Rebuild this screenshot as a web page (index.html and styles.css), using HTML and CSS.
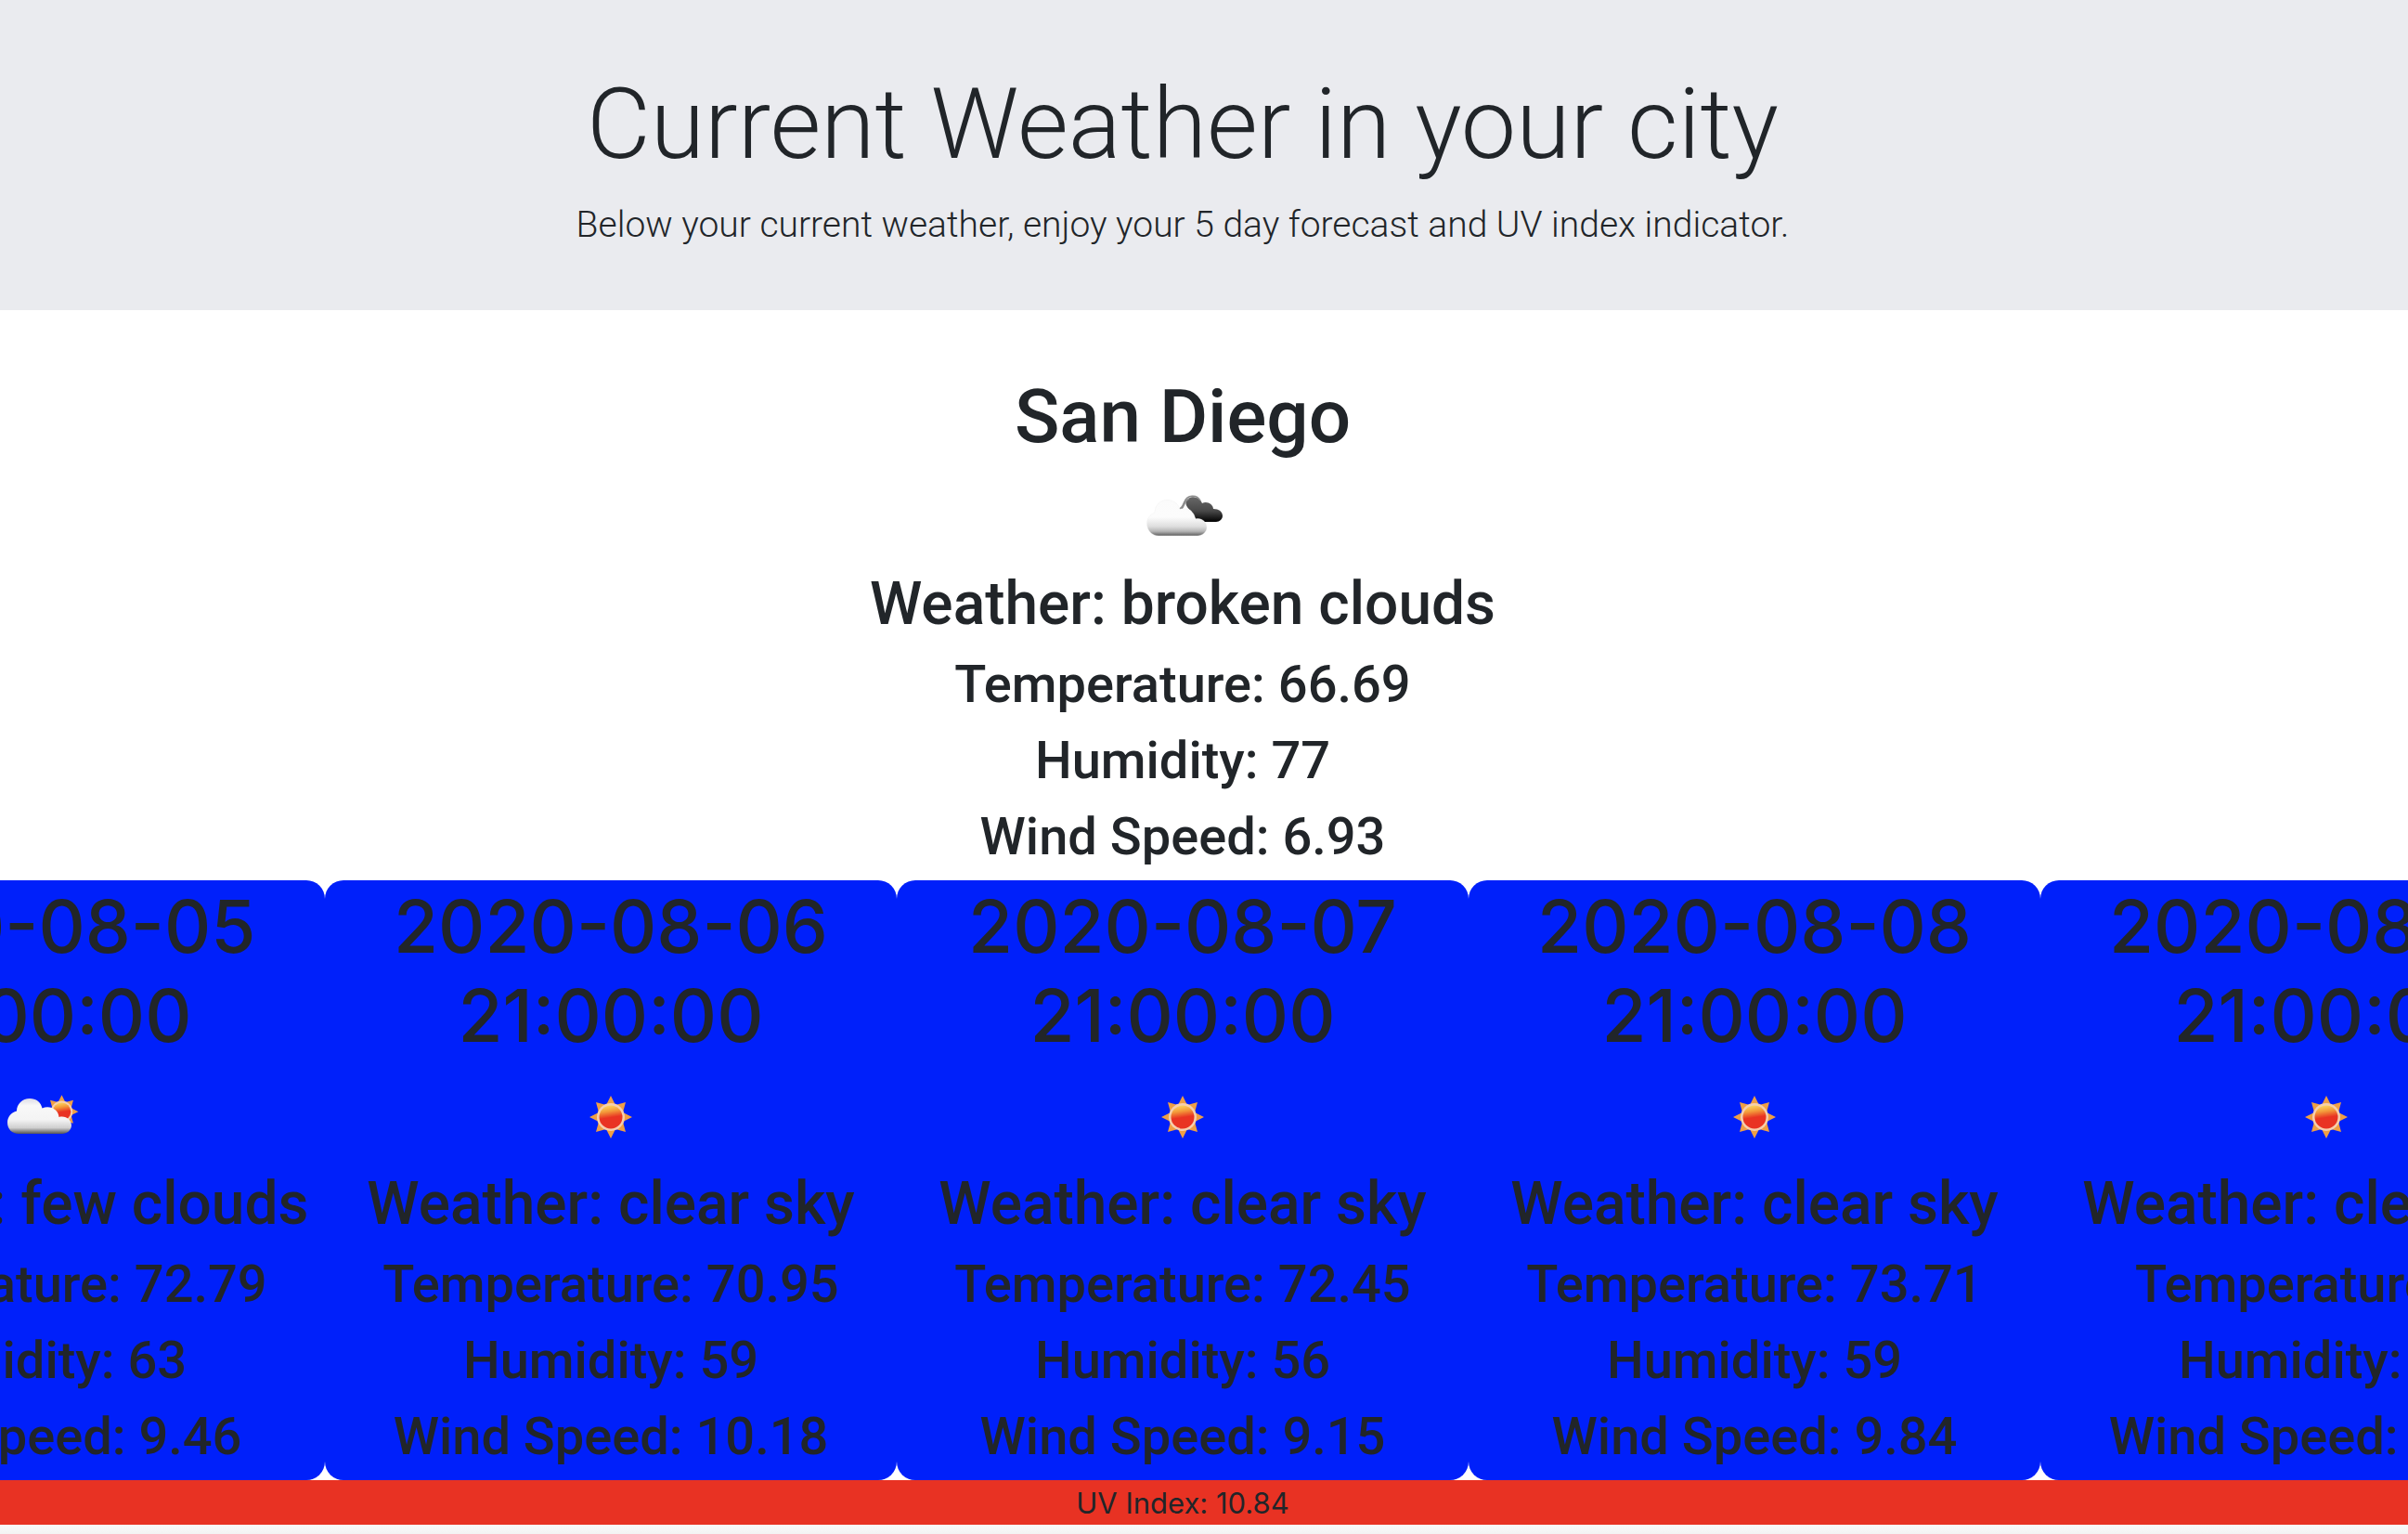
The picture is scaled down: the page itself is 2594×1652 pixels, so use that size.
FILE: index.html
```html
<!DOCTYPE html>
<html lang="en">
<head>
<meta charset="utf-8">
<meta name="viewport" content="width=device-width, initial-scale=1">
<title>Current Weather</title>
<link rel="stylesheet" href="styles.css">
</head>
<body>
<svg class="sprite" aria-hidden="true">
  <defs>
    <linearGradient id="cloud-fill" gradientUnits="userSpaceOnUse" x1="0" y1="27" x2="0" y2="67">
      <stop offset="0" stop-color="#fbfbfb"/><stop offset=".5" stop-color="#fcfcfc"/><stop offset=".75" stop-color="#dedede"/><stop offset=".88" stop-color="#b5b5b5"/><stop offset="1" stop-color="#5c5c5c"/>
    </linearGradient>
    <linearGradient id="cloud-lit" gradientUnits="userSpaceOnUse" x1="0" y1="27" x2="0" y2="65">
      <stop offset="0" stop-color="#dcdce6"/><stop offset=".2" stop-color="#f8f8f8"/><stop offset=".6" stop-color="#f4f4f4"/><stop offset=".83" stop-color="#cfcfcf"/><stop offset="1" stop-color="#555"/>
    </linearGradient>
    <linearGradient id="cloud-dark" gradientUnits="userSpaceOnUse" x1="0" y1="26" x2="0" y2="52">
      <stop offset="0" stop-color="#666"/><stop offset=".55" stop-color="#484848"/><stop offset="1" stop-color="#000"/>
    </linearGradient>
    <linearGradient id="sun-core" x1=".4" y1="0" x2=".55" y2="1">
      <stop offset="0" stop-color="#fbd660"/><stop offset=".25" stop-color="#f39a3a"/><stop offset=".52" stop-color="#e93323"/><stop offset="1" stop-color="#e93323"/>
    </linearGradient>
    <symbol id="sun" viewBox="0 0 100 100">
      <path fill="#ee9f45" d="M50 24 55 34 66 31 63 42 73 47 63 52 66 63 55 60 50 70 45 60 34 63 37 52 27 47 37 42 34 31 45 34Z"/>
      <circle cx="50" cy="47" r="15" fill="#f6cfae"/>
      <circle cx="50" cy="47" r="12.5" fill="url(#sun-core)"/>
    </symbol>
    <symbol id="few-clouds" viewBox="0 0 100 100">
      <g transform="translate(35.5 4.5) scale(.78)"><use href="#sun" width="100" height="100"/></g>
      <path fill="url(#cloud-lit)" d="M28 65C21 65 16 60 16 53 16 47 20 42 26 40.500 26 33 32 27 40 27 47 27 52 31 53.500 37.500 62 34 71 39 71.500 47 79 45 85 50 85 56 85 61 80 65 75 65Z"/>
    </symbol>
    <symbol id="broken-clouds" viewBox="0 0 100 100">
      <path fill="url(#cloud-dark)" d="M59 40C48 32 56 24 63 25.500 67 26 70 29 71 32 76 29 83 33 83 38 89 38 93 41 93 45.500 93 49 90 52 86 52H66Z"/>
      <path fill="none" stroke="#8c8c8c" stroke-width="1.500" d="M46.500 38C50 37 50.500 33 52 30 55 23 65 22 69 29M49 38C52 35 52 29 57 27"/>
      <path fill="url(#cloud-fill)" stroke="#eee" stroke-width=".4" d="M24 67C17 67 11.500 61 11.500 54 11.500 48 15 44 20 42 20 34 26 28.500 33 28.500 40 28.500 45 32 47 38.500 55 36 63 41 63.500 49 70 47 76 52 76 58 76 63 71 67 66 67Z"/>
    </symbol>
  </defs>
</svg>

<header class="hero">
  <h1 class="hero-title">Current Weather in your city</h1>
  <p class="hero-lead">Below your current weather, enjoy your 5 day forecast and UV index indicator.</p>
</header>

<main>
  <section class="current">
    <h2 class="place">San Diego</h2>
    <svg class="icon" role="img" aria-label="broken clouds"><use href="#broken-clouds"/></svg>
    <h3 class="summary">Weather: broken clouds</h3>
    <h4 class="reading">Temperature: 66.69</h4>
    <h4 class="reading">Humidity: 77</h4>
    <h4 class="reading">Wind Speed: 6.93</h4>
  </section>

  <section class="forecast">
    <article class="card">
      <h2 class="date">2020-08-05 21:00:00</h2>
      <svg class="icon" role="img" aria-label="few clouds"><use href="#few-clouds"/></svg>
      <h3 class="summary">Weather: few clouds</h3>
      <h4 class="reading">Temperature: 72.79</h4>
      <h4 class="reading">Humidity: 63</h4>
      <h4 class="reading">Wind Speed: 9.46</h4>
    </article>
    <article class="card">
      <h2 class="date">2020-08-06 21:00:00</h2>
      <svg class="icon" role="img" aria-label="clear sky"><use href="#sun"/></svg>
      <h3 class="summary">Weather: clear sky</h3>
      <h4 class="reading">Temperature: 70.95</h4>
      <h4 class="reading">Humidity: 59</h4>
      <h4 class="reading">Wind Speed: 10.18</h4>
    </article>
    <article class="card">
      <h2 class="date">2020-08-07 21:00:00</h2>
      <svg class="icon" role="img" aria-label="clear sky"><use href="#sun"/></svg>
      <h3 class="summary">Weather: clear sky</h3>
      <h4 class="reading">Temperature: 72.45</h4>
      <h4 class="reading">Humidity: 56</h4>
      <h4 class="reading">Wind Speed: 9.15</h4>
    </article>
    <article class="card">
      <h2 class="date">2020-08-08 21:00:00</h2>
      <svg class="icon" role="img" aria-label="clear sky"><use href="#sun"/></svg>
      <h3 class="summary">Weather: clear sky</h3>
      <h4 class="reading">Temperature: 73.71</h4>
      <h4 class="reading">Humidity: 59</h4>
      <h4 class="reading">Wind Speed: 9.84</h4>
    </article>
    <article class="card">
      <h2 class="date">2020-08-09 21:00:00</h2>
      <svg class="icon" role="img" aria-label="clear sky"><use href="#sun"/></svg>
      <h3 class="summary">Weather: clear sky</h3>
      <h4 class="reading">Temperature: 72</h4>
      <h4 class="reading">Humidity: 60</h4>
      <h4 class="reading">Wind Speed: 10.22</h4>
    </article>
  </section>

  <p class="uv">UV Index: 10.84</p>
</main>
<footer class="edge"></footer>
</body>
</html>
```
FILE: styles.css
```css
:root {
  --gutter: 46px;
}

* {
  box-sizing: border-box;
}

body {
  margin: 0;
  overflow-x: hidden;
  background: #fff;
  color: #212529;
  font-family: Roboto, "Liberation Sans", sans-serif;
  font-size: 32px;
  text-align: center;
}

h1, h2, h3, h4, p {
  margin: 0;
}

.sprite {
  display: block;
  width: 0;
  height: 0;
}

.hero,
.current,
.forecast,
.uv {
  padding-right: var(--gutter);
}

.hero {
  padding-top: 64px;
  padding-bottom: 60px;
  background: #eaebef;
}

.hero-title {
  margin-bottom: 6px;
  font-size: 106px;
  font-weight: 300;
  line-height: 140px;
}

.hero-lead {
  font-size: 39px;
  font-weight: 300;
  line-height: 64px;
}

.current {
  padding-top: 64px;
}

.place {
  margin-bottom: 10px;
  font-size: 80px;
  font-weight: 500;
  line-height: 102px;
}

.date {
  margin-bottom: 14px;
  padding-top: 2px;
  font-family: Inter, "Liberation Sans", sans-serif;
  font-size: 78px;
  font-weight: 500;
  line-height: 96px;
}

.icon {
  display: block;
  width: 100px;
  height: 100px;
  margin: 0 auto;
}

.summary {
  margin-bottom: 11px;
  font-size: 64px;
  font-weight: 500;
  line-height: 81px;
}

.reading {
  margin-bottom: 12px;
  font-size: 56px;
  font-weight: 500;
  line-height: 70px;
}

.forecast {
  display: flex;
  justify-content: center;
}

.card {
  flex: 0 0 616px;
  border-radius: 20px;
  background: #0020fa;
}

.uv {
  padding-top: 2px;
  background: #e83223;
  font-family: Inter, "Liberation Sans", sans-serif;
  font-size: 31px;
  line-height: 46px;
}

.edge {
  height: 10px;
  background: linear-gradient(#f9f9f9, #f3f3f3);
}
```
